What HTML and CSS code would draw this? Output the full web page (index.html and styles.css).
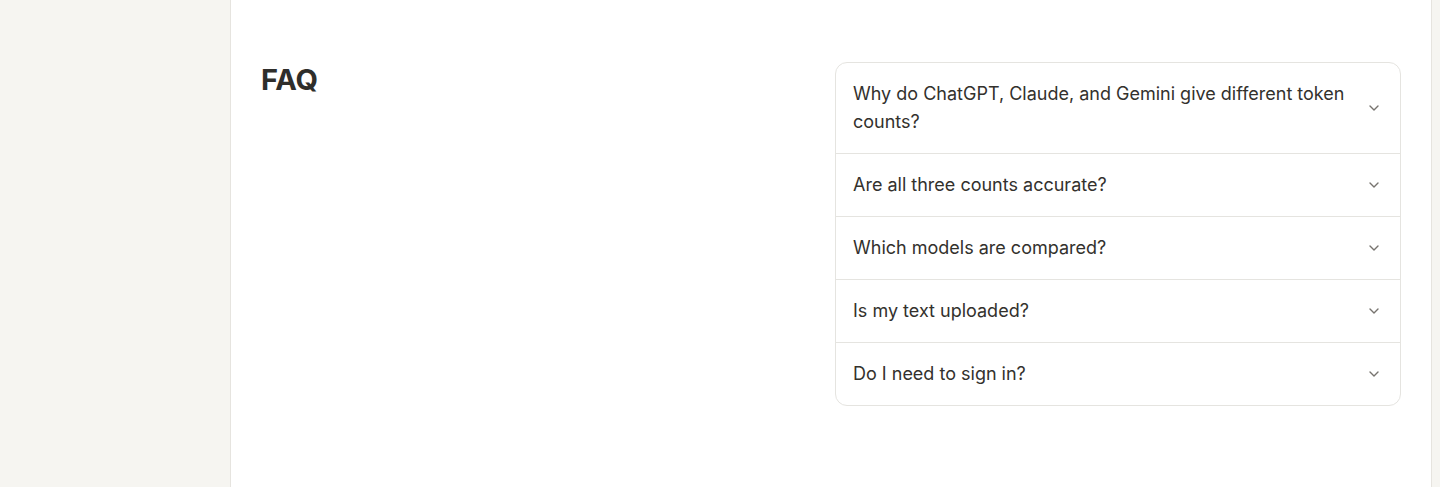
FILE: index.html
```html
<!DOCTYPE html>
<html>
  <head>
    <link rel="stylesheet" href="styles.css">
  </head>
  <body>
    <div class="layout">
      <aside class="sidebar"></aside>

      <main class="panel">
        <section class="faq">
          <h2 class="faq-title">FAQ</h2>

          <div class="accordion">
            <div class="item">
              <span class="question">Why do ChatGPT, Claude, and Gemini give different token counts?</span>
              <svg class="chevron" viewBox="0 0 16 16"><path d="M4 6l4 4 4-4"/></svg>
            </div>
            <div class="item">
              <span class="question">Are all three counts accurate?</span>
              <svg class="chevron" viewBox="0 0 16 16"><path d="M4 6l4 4 4-4"/></svg>
            </div>
            <div class="item">
              <span class="question">Which models are compared?</span>
              <svg class="chevron" viewBox="0 0 16 16"><path d="M4 6l4 4 4-4"/></svg>
            </div>
            <div class="item">
              <span class="question">Is my text uploaded?</span>
              <svg class="chevron" viewBox="0 0 16 16"><path d="M4 6l4 4 4-4"/></svg>
            </div>
            <div class="item">
              <span class="question">Do I need to sign in?</span>
              <svg class="chevron" viewBox="0 0 16 16"><path d="M4 6l4 4 4-4"/></svg>
            </div>
          </div>
        </section>
      </main>

      <div class="edge"></div>
    </div>
  </body>
</html>
```

FILE: styles.css
```css
html, body {
  margin: 0;
  height: 100%;
}
body {
  font-family: Inter, "Noto Sans", sans-serif;
  color: #33312d;
  background-color: #f6f5f1;
}
.layout {
  display: flex;
  height: 487px;
  overflow: hidden;
}
.sidebar {
  width: 230px;
  flex-shrink: 0;
  background-color: #f6f5f1;
}
.panel {
  box-sizing: border-box;
  width: 1202px;
  flex-shrink: 0;
  background-color: #fff;
  border-left: 1px solid #e6e4df;
  border-right: 1px solid #e6e4df;
  padding: 62px 30px 0 30px;
}
.edge {
  flex: 1;
  background-color: #f6f5f1;
}

.faq {
  display: grid;
  grid-template-columns: 1fr 1fr;
  column-gap: 8px;
  align-items: start;
}
.faq-title {
  margin: 0;
  padding-top: 2px;
  font-size: 29px;
  font-weight: 700;
  line-height: 32px;
  letter-spacing: -0.2px;
  color: #2f2e2b;
}

.accordion {
  border: 1px solid #e5e4e0;
  border-radius: 12px;
  overflow: hidden;
}
.item {
  display: flex;
  align-items: center;
  justify-content: space-between;
  gap: 16px;
  padding: 17px 18px 17px 17px;
  border-top: 1px solid #e5e4e0;
  font-size: 18px;
  line-height: 28px;
}
.item:first-child {
  border-top: none;
}
.question {
  flex: 1;
}
.chevron {
  width: 16px;
  height: 16px;
  flex-shrink: 0;
  fill: none;
  stroke: #77746f;
  stroke-width: 1.4;
  stroke-linecap: round;
  stroke-linejoin: round;
}
```
